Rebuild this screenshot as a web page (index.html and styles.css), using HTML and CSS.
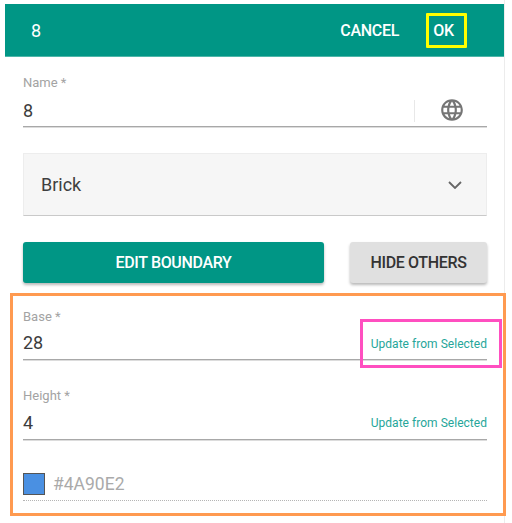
FILE: index.html
```html
<!DOCTYPE html>
<html lang="en">
<head>
<meta charset="utf-8">
<title>Edit element</title>
<link rel="stylesheet" href="styles.css">
</head>
<body>
<main class="panel">
  <header class="appbar">
    <span class="appbar-title">8</span>
    <div class="appbar-actions">
      <button class="bar-btn cancel">CANCEL</button>
      <button class="bar-btn ok">OK</button>
    </div>
  </header>
  <div class="content">
    <div class="field name-field">
      <label class="field-label">Name *</label>
      <div class="field-row">
        <span class="field-value">8</span>
        <span class="divider"></span>
        <svg class="globe" viewBox="0 0 24 24" width="26" height="26"><path fill="#757575" d="M11.99 2C6.47 2 2 6.48 2 12s4.47 10 9.99 10C17.52 22 22 17.52 22 12S17.52 2 11.99 2zm6.93 6h-2.95c-.32-1.25-.78-2.45-1.38-3.56 1.84.63 3.37 1.91 4.33 3.56zM12 4.04c.83 1.2 1.48 2.53 1.91 3.96h-3.82c.43-1.43 1.08-2.76 1.91-3.96zM4.26 14C4.1 13.36 4 12.69 4 12s.1-1.36.26-2h3.38c-.08.66-.14 1.32-.14 2s.06 1.34.14 2H4.26zm.82 2h2.95c.32 1.25.78 2.45 1.38 3.56-1.84-.63-3.37-1.9-4.33-3.56zm2.95-8H5.08c.96-1.66 2.49-2.93 4.33-3.56C8.81 5.55 8.35 6.75 8.03 8zM12 19.96c-.83-1.2-1.48-2.53-1.91-3.96h3.82c-.43 1.43-1.08 2.76-1.91 3.96zM14.34 14H9.66c-.09-.66-.16-1.32-.16-2s.07-1.35.16-2h4.68c.09.65.16 1.32.16 2s-.07 1.34-.16 2zm.25 5.56c.6-1.11 1.06-2.31 1.38-3.56h2.95c-.96 1.65-2.49 2.93-4.33 3.56zM16.36 14c.08-.66.14-1.32.14-2s-.06-1.34-.14-2h3.38c.16.64.26 1.31.26 2s-.1 1.36-.26 2h-3.38z"/></svg>
      </div>
    </div>
    <div class="select">
      <span>Brick</span>
      <svg class="chevron" viewBox="0 0 14 8" width="14" height="8"><path fill="none" stroke="#666" stroke-width="1.8" d="M1 1l6 6 6-6"/></svg>
    </div>
    <div class="actions">
      <button class="btn primary">EDIT BOUNDARY</button>
      <button class="btn secondary">HIDE OTHERS</button>
    </div>
  </div>
  <section class="dimensions">
    <div class="field">
      <label class="field-label">Base *</label>
      <div class="field-row">
        <span class="field-value">28</span>
        <a class="update highlighted">Update from Selected</a>
      </div>
    </div>
    <div class="field height-field">
      <label class="field-label">Height *</label>
      <div class="field-row">
        <span class="field-value">4</span>
        <a class="update">Update from Selected</a>
      </div>
    </div>
    <div class="color-row">
      <span class="swatch"></span>
      <span class="color-value">#4A90E2</span>
    </div>
  </section>
</main>
</body>
</html>
```
FILE: styles.css
```css
*, *::after { box-sizing: border-box; }
html, body { margin: 0; padding: 0; background: #fff; }
body {
  font-family: Roboto, "Liberation Sans", sans-serif;
  height: 523px;
  overflow: hidden;
}
.panel {
  margin-left: 5px;
  width: 500px;
  height: 523px;
  padding-top: 4px;
  border-right: 1px solid #ececec;
}
.appbar {
  height: 53px;
  background: #009685;
  border-bottom: 1px solid #4db6a9;
  display: flex;
  align-items: center;
  justify-content: space-between;
  padding: 0 37px 0 26px;
  color: #fff;
}
.appbar-title { font-size: 18px; font-weight: 400; }
.appbar-actions { display: flex; align-items: center; gap: 27px; }
.bar-btn {
  border: 0;
  background: none;
  color: #fff;
  font: 500 16px Roboto, sans-serif;
  letter-spacing: -0.3px;
  padding: 0;
}
.ok {
  width: 41px;
  height: 35px;
  border: 3px solid #ffff00;
  border-radius: 1px;
  padding-right: 6px;
}
.content { padding: 0 17px 0 18px; }
.field { position: relative; }
.name-field { padding-top: 18px; }
.field-label {
  display: block;
  color: #a3a3a3;
  font-size: 13px;
  line-height: 16px;
  height: 16px;
}
.field-row {
  display: flex;
  align-items: center;
  height: 28px;
  margin-top: 8px;
  border-bottom: 1px solid #a8a8a8;
  box-shadow: 0 1px 0 #dcdcdc;
  padding-bottom: 4px;
}
.field-value { font-size: 18px; color: #3c3c3c; flex: 1; }
.divider { width: 1px; height: 22px; background: #e8e8e8; margin-right: 24px; }
.globe { margin-right: 22px; margin-top: -2px; }
.select {
  height: 63px;
  margin-top: 26px;
  background: #f6f6f6;
  border: 1px solid #ededed;
  border-bottom: 1px solid #c9c9c9;
  padding: 0 24px 0 17px;
  display: flex;
  align-items: center;
  justify-content: space-between;
  font-size: 18px;
  color: #3f3f3f;
}
.actions { display: flex; justify-content: space-between; margin-top: 26px; }
.btn {
  height: 41px;
  border: 0;
  border-radius: 3px;
  font: 500 16px Roboto, sans-serif;
  letter-spacing: -0.35px;
  box-shadow: 0 2px 3px rgba(0,0,0,.28);
}
.primary { width: 301px; background: #009685; color: #fff; }
.secondary { width: 137px; background: #e0e0e0; color: #333; }
.dimensions {
  margin: 10px 0 0 5px;
  width: 496px;
  height: 223px;
  border: 3px solid #ff9a50;
  padding: 13px 16px 0 10px;
}
.dimensions .field-row { height: 33px; margin-top: 2px; padding-bottom: 2px; }
.dimensions .height-field .field-row { margin-top: 3px; }
.height-field { margin-top: 28px; }
.update {
  font-size: 12px;
  color: #26a69a;
  white-space: nowrap;
  position: relative;
  letter-spacing: 0.03px;
  padding-top: 3px;
}
.height-field .update { padding-top: 1px; }
.highlighted::after {
  content: "";
  position: absolute;
  left: -11px;
  top: -15px;
  width: 142px;
  height: 49px;
  border: 3px solid #ff4fc0;
}
.color-row {
  display: flex;
  align-items: center;
  gap: 8px;
  margin-top: 32px;
  height: 29px;
  padding-bottom: 5px;
  border-bottom: 1px dotted #b5b5b5;
}
.swatch {
  width: 22px;
  height: 22px;
  background: #4a90e2;
  border: 1px solid #555;
}
.color-value { font-size: 17.5px; color: #aaa; }
```
